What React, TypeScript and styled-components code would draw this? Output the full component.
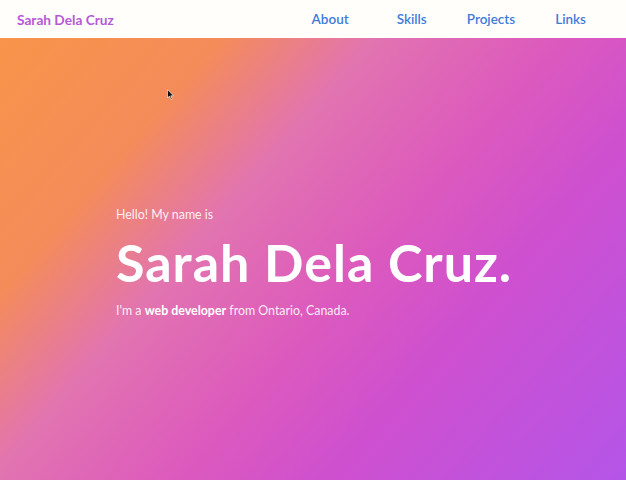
import React from "react";
import styled, { createGlobalStyle } from "styled-components";

const Global = createGlobalStyle`
  html, body { margin: 0; padding: 0; }
  body { font-family: Lato, "Open Sans", sans-serif; }
  * { box-sizing: border-box; }
`;

const Page = styled.div`
  width: 626px;
  height: 480px;
  display: flex;
  flex-direction: column;
  position: relative;
  overflow: hidden;
`;

const Header = styled.header`
  height: 38px;
  flex: none;
  background: #fffefb;
  display: flex;
  align-items: center;
  justify-content: space-between;
  padding: 0 40px 0 17px;
`;

const Brand = styled.a`
  font-weight: 700;
  font-size: 13.7px;
  color: #b45ad6;
  text-decoration: none;
`;

const Nav = styled.nav`
  display: flex;
  align-items: center;
  gap: 40px;
`;

const NavLink = styled.a<{ $wide?: boolean }>`
  font-size: 13.5px;
  font-weight: 600;
  color: #3f7bdb;
  text-decoration: none;
  margin-right: ${(p) => (p.$wide ? "8px" : "0")};
`;

const Hero = styled.section`
  flex: 1;
  display: flex;
  flex-direction: column;
  justify-content: center;
  padding: 7px 0 0 116px;
  background: linear-gradient(
    131deg,
    #f8944a 0%,
    #f48c5a 22%,
    #e274b0 37%,
    #dc5abd 55%,
    #cf50cf 70%,
    #b455e8 100%
  );
  color: #fff;
`;

const Intro = styled.p`
  margin: 0 0 11px;
  font-size: 12.4px;
  color: rgba(255, 255, 255, 0.9);
`;

const Title = styled.h1`
  margin: 0;
  font-size: 52px;
  font-weight: 700;
  line-height: 1.15;
  letter-spacing: 1px;
  color: #fff;
`;

const Sub = styled.p`
  margin: 10px 0 0;
  font-size: 12.4px;
  color: rgba(255, 255, 255, 0.9);
  strong {
    font-weight: 700;
    color: #fff;
  }
`;

const Cursor = styled.svg`
  position: absolute;
  left: 167px;
  top: 89px;
  width: 7px;
  height: 11px;
`;

export default function App() {
  return (
    <>
      <Global />
      <Page>
        <Header>
          <Brand href="#">Sarah Dela Cruz</Brand>
          <Nav>
            <NavLink href="#" $wide>About</NavLink>
            <NavLink href="#">Skills</NavLink>
            <NavLink href="#">Projects</NavLink>
            <NavLink href="#">Links</NavLink>
          </Nav>
        </Header>
        <Hero>
          <Intro>Hello! My name is</Intro>
          <Title>Sarah Dela Cruz.</Title>
          <Sub>
            I'm a <strong>web developer</strong> from Ontario, Canada.
          </Sub>
        </Hero>
        <Cursor viewBox="0 0 7 11">
          <path d="M0.5 0.5 L0.5 9 L2.5 7 L4 10.5 L5.2 10 L3.8 6.8 L6.5 6.8 Z" fill="#111" stroke="#fff" strokeWidth="0.6" />
        </Cursor>
      </Page>
    </>
  );
}
